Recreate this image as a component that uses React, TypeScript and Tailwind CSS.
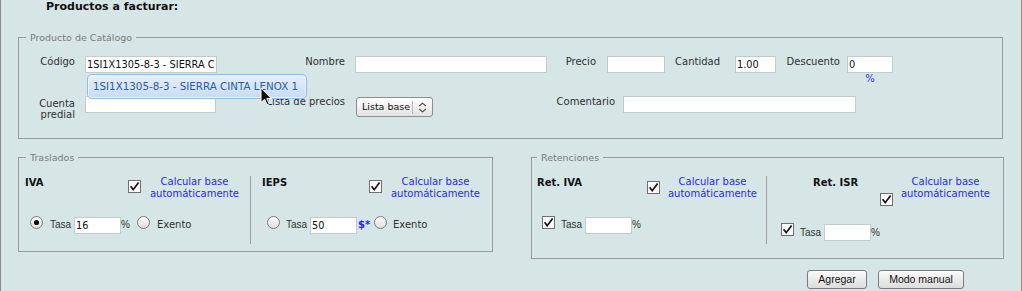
import React from 'react';

const Check = ({ className = '' }: { className?: string }) => (
  <svg width="13" height="13" viewBox="0 0 13 13" className={`shrink-0 ${className}`}>
    <rect x="0.5" y="0.5" width="12" height="12" fill="#fbfbfb" stroke="#6f6f6f" />
    <path d="M2.6 6.3 L5.2 9.7 L10.6 2.6" fill="none" stroke="#111" strokeWidth="1.7" />
  </svg>
);

const Radio = ({ on = false, className = '' }: { on?: boolean; className?: string }) => (
  <svg width="13" height="13" viewBox="0 0 13 13" className={`shrink-0 ${className}`}>
    <defs>
      <linearGradient id="rg" x1="0" y1="0" x2="0" y2="1">
        <stop offset="0" stopColor="#ffffff" />
        <stop offset="1" stopColor="#dcdcdc" />
      </linearGradient>
    </defs>
    <circle cx="6.5" cy="6.5" r="6" fill="url(#rg)" stroke="#7a7a7a" />
    {on && <circle cx="6.5" cy="6.5" r="2.6" fill="#111" />}
  </svg>
);

const Field = ({ className = '', value = '' }: { className?: string; value?: string }) => (
  <input
    readOnly
    value={value}
    className={`h-[17px] shrink-0 border border-[#c2cccc] bg-white px-[1px] font-['DejaVu_Sans',sans-serif] text-[9.8px] text-[#111] outline-none ${className}`}
  />
);

const Calc = ({ className = '' }: { className?: string }) => (
  <span className={`shrink-0 text-center leading-[12px] text-[#2828f0] ${className}`}>
    Calcular base
    <br />
    automáticamente
  </span>
);

export default function App() {
  return (
    <div className="relative h-[291px] w-[1022px] overflow-hidden border-x border-[#8c8c8c] bg-[#d6e6e6] font-['DejaVu_Sans',sans-serif] text-[10px] text-[#303030]">
      <div className="h-[31px] pl-[45px] text-[11px] font-bold leading-[13px] text-[#111]">Productos a facturar:</div>

      {/* Producto de catálogo */}
      <fieldset className="ml-[17px] w-[985px] border border-[#9a9a9a]">
        <legend className="ml-[7px] px-[4px] text-[9.5px] leading-[13px] text-[#7a7a7a]">Producto de Catálogo</legend>
        <div className="h-[94px] pt-[12px]">
          <div className="flex items-start">
            <span className="w-[56px] shrink-0 text-right leading-[12px]">Código</span>
            <Field className="ml-[10px] w-[132px]" value="1SI1X1305-8-3 - SIERRA C" />
            <span className="w-[128px] shrink-0 text-right leading-[12px]">Nombre</span>
            <Field className="ml-[10px] w-[192px]" />
            <span className="w-[49px] shrink-0 text-right leading-[12px]">Precio</span>
            <Field className="ml-[11px] w-[58px]" />
            <span className="w-[55px] shrink-0 text-right leading-[12px]">Cantidad</span>
            <Field className="ml-[15px] w-[41px]" value="1.00" />
            <span className="w-[64px] shrink-0 text-right leading-[12px]">Descuento</span>
            <div className="ml-[7px] flex w-[46px] flex-col items-center">
              <Field className="w-[46px]" value="0" />
              <span className="leading-[12px] text-[#3434ea]">%</span>
            </div>
          </div>
          <div className="mt-[11px] flex items-start">
            <span className="mt-[2px] w-[56px] shrink-0 text-right leading-[11px]">
              Cuenta
              <br />
              predial
            </span>
            <Field className="ml-[10px] w-[131px]" />
            <span className="w-[129px] shrink-0 text-right leading-[12px]">Lista de precios</span>
            <div className="ml-[11px] mt-[1px] flex h-[20px] w-[77px] shrink-0 items-center rounded-[3px] border border-[#8e8e8e] bg-linear-to-b from-white to-[#e2e2e2] text-[#111]">
              <span className="w-[55px] shrink-0 whitespace-nowrap pl-[5px] text-[9.5px] leading-[12px]">Lista base</span>
              <span className="h-[13px] w-px bg-[#b8b8b8]" />
              <svg width="9" height="11" viewBox="0 0 9 11" className="ml-[5px]">
                <path d="M1.2 4 L4.5 1.2 L7.8 4 M1.2 7 L4.5 9.8 L7.8 7" fill="none" stroke="#444" strokeWidth="1.1" />
              </svg>
            </div>
            <span className="w-[182px] shrink-0 text-right leading-[12px]">Comentario</span>
            <Field className="ml-[8px] w-[233px]" />
          </div>
        </div>
      </fieldset>

      <div className="mt-[12px] flex items-start">
        {/* Traslados */}
        <fieldset className="ml-[17px] w-[475px] shrink-0 border border-[#9a9a9a]">
          <legend className="ml-[7px] px-[4px] text-[9.5px] leading-[13px] text-[#7a7a7a]">Traslados</legend>
          <div className="flex h-[87px]">
            <div className="w-[231px] shrink-0">
              <div className="mt-[12px] flex items-start pl-[6px]">
                <span className="mt-[1px] w-[103px] shrink-0 font-bold leading-[12px] text-[#111]">IVA</span>
                <Check className="mt-[4px]" />
                <Calc className="w-[107px]" />
              </div>
              <div className="mt-[16px] flex items-start pl-[11px]">
                <Radio on />
                <span className="ml-[7px] mt-[3px] w-[24px] shrink-0 font-['Liberation_Sans',Arial,sans-serif] leading-[12px]">Tasa</span>
                <Field className="mt-[1px] w-[47px]" value="16" />
                <span className="mt-[3px] w-[16px] shrink-0 font-['Liberation_Sans',Arial,sans-serif] leading-[12px]">%</span>
                <Radio />
                <span className="ml-[7px] mt-[3px] leading-[12px]">Exento</span>
              </div>
            </div>
            <div className="mt-[12px] h-[68px] w-px shrink-0 bg-[#a0a0a0]" />
            <div className="flex-1">
              <div className="mt-[12px] flex items-start pl-[11px]">
                <span className="mt-[1px] w-[107px] shrink-0 font-bold leading-[12px] text-[#111]">IEPS</span>
                <Check className="mt-[4px]" />
                <Calc className="w-[107px]" />
              </div>
              <div className="mt-[16px] flex items-start pl-[16px]">
                <Radio />
                <span className="ml-[6px] mt-[3px] w-[24px] shrink-0 font-['Liberation_Sans',Arial,sans-serif] leading-[12px]">Tasa</span>
                <Field className="mt-[1px] w-[47px]" value="50" />
                <span className="mt-[3px] w-[17px] shrink-0 pl-[1px] font-bold leading-[12px] text-[#2828f0]">$*</span>
                <Radio />
                <span className="ml-[6px] mt-[3px] leading-[12px]">Exento</span>
              </div>
            </div>
          </div>
        </fieldset>

        {/* Retenciones */}
        <fieldset className="ml-[38px] w-[473px] shrink-0 border border-[#9a9a9a]">
          <legend className="ml-[5px] px-[4px] text-[9.5px] leading-[13px] text-[#7a7a7a]">Retenciones</legend>
          <div className="flex h-[94px]">
            <div className="w-[234px] shrink-0">
              <div className="mt-[12px] flex items-start pl-[5px]">
                <span className="mt-[1px] w-[110px] shrink-0 font-bold leading-[12px] text-[#111]">Ret. IVA</span>
                <Check className="mt-[5px]" />
                <Calc className="w-[105px]" />
              </div>
              <div className="mt-[16px] flex items-start pl-[10px]">
                <Check />
                <span className="ml-[6px] mt-[3px] w-[24px] shrink-0 font-['Liberation_Sans',Arial,sans-serif] leading-[12px]">Tasa</span>
                <Field className="mt-[1px] w-[47px]" />
                <span className="mt-[3px] font-['Liberation_Sans',Arial,sans-serif] leading-[12px]">%</span>
              </div>
            </div>
            <div className="mt-[12px] h-[68px] w-px shrink-0 bg-[#a0a0a0]" />
            <div className="flex-1">
              <div className="mt-[12px] flex items-start pl-[46px]">
                <span className="mt-[1px] w-[67px] shrink-0 font-bold leading-[12px] text-[#111]">Ret. ISR</span>
                <Check className="mt-[17px]" />
                <Calc className="w-[105px]" />
              </div>
              <div className="mt-[17px] flex items-start pl-[14px]">
                <Check />
                <span className="ml-[6px] mt-[4px] w-[24px] shrink-0 font-['Liberation_Sans',Arial,sans-serif] leading-[12px]">Tasa</span>
                <Field className="mt-[1px] w-[47px]" />
                <span className="mt-[4px] font-['Liberation_Sans',Arial,sans-serif] leading-[12px]">%</span>
              </div>
            </div>
          </div>
        </fieldset>
      </div>

      <div className="mt-[11px] flex justify-end gap-[11px] pr-[57px]">
        <button className="h-[19px] w-[60px] rounded-[3px] border border-[#7d7d7d] bg-linear-to-b from-[#fbfbfb] to-[#dcdcdc] font-['Liberation_Sans',Arial,sans-serif] text-[10.5px] text-[#111]">
          Agregar
        </button>
        <button className="h-[19px] w-[86px] rounded-[3px] border border-[#7d7d7d] bg-linear-to-b from-[#fbfbfb] to-[#dcdcdc] font-['Liberation_Sans',Arial,sans-serif] text-[10.5px] text-[#111]">
          Modo manual
        </button>
      </div>

      {/* autocomplete suggestion */}
      <div className="absolute left-[86px] top-[74px] flex h-[25px] w-[220px] items-center whitespace-nowrap rounded-[5px] border border-[#93bbe8] bg-linear-to-b from-[#e6effa] to-[#c8dbf1] pl-[5px] text-[10.3px] text-[#2a5d9f] shadow-[inset_0_0_0_1px_#eef5fd]">
        1SI1X1305-8-3 - SIERRA CINTA LENOX 1
      </div>

      {/* mouse pointer */}
      <svg width="13" height="20" viewBox="0 0 13 20" className="absolute left-[259px] top-[87px]">
        <path d="M1 1 L1 15.5 L4.6 12.3 L7.1 17.8 L9.2 16.9 L6.8 11.5 L11.3 11.5 Z" fill="#111" stroke="#fff" strokeWidth="1" strokeLinejoin="round" />
      </svg>
    </div>
  );
}
